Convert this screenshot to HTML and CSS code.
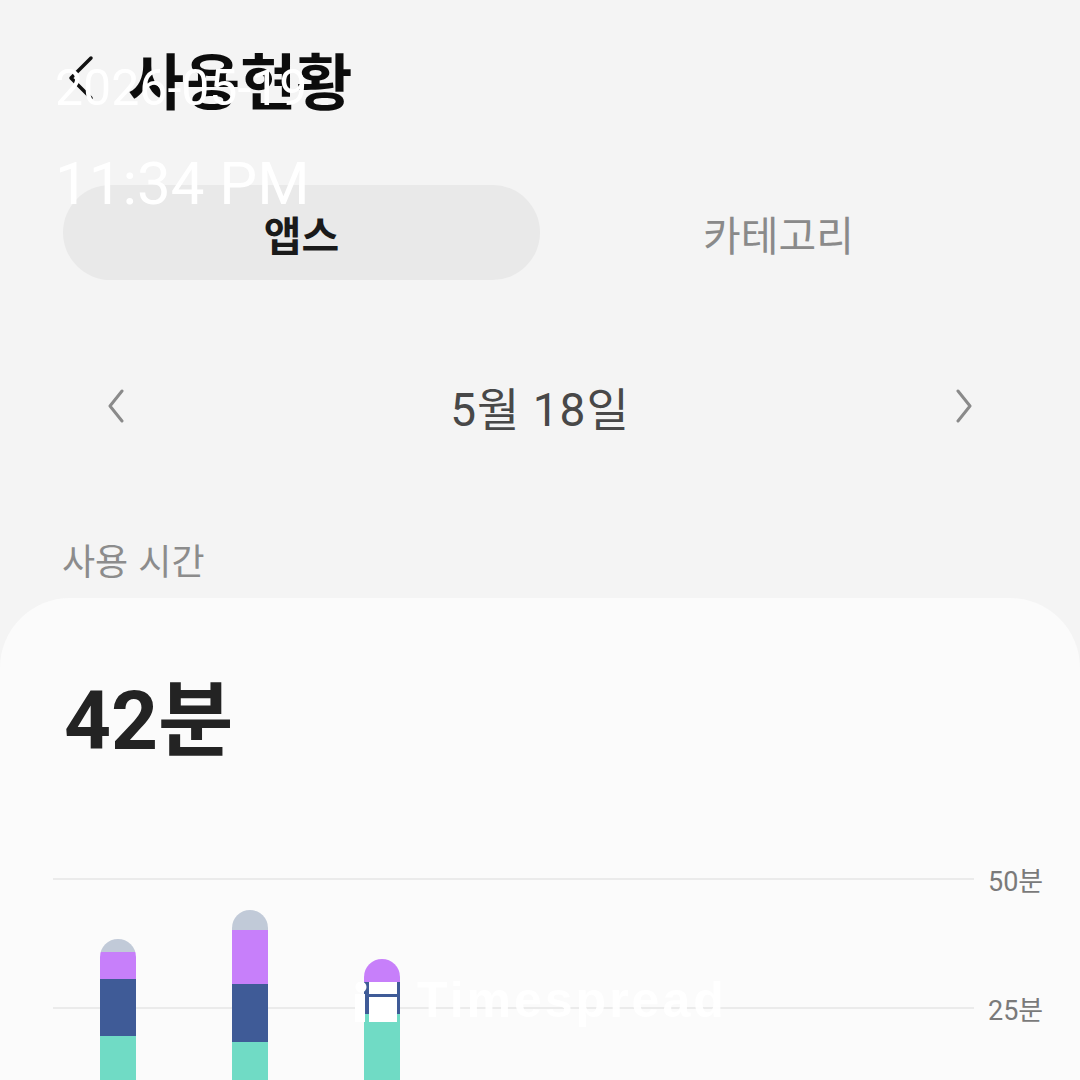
FILE: index.html
```html
<!DOCTYPE html>
<html lang="ko">
<head>
    <meta charset="utf-8">
    <link rel="stylesheet" href="styles.css">
    <title>사용현황</title>
</head>
<body>
    <header class="topbar">
        <svg class="back" width="34" height="48" viewBox="0 0 34 48">
            <polyline points="28,4 8,24 28,44" />
        </svg>
        <h1 class="title">사용현황</h1>
    </header>

    <div class="tabs">
        <div class="tab active">앱스</div>
        <div class="tab">카테고리</div>
    </div>

    <div class="datenav">
        <svg class="chev" width="22" height="34" viewBox="0 0 22 34">
            <polyline points="17,2 5,17 17,32" />
        </svg>
        <div class="date">5월 18일</div>
        <svg class="chev" width="22" height="34" viewBox="0 0 22 34">
            <polyline points="5,2 17,17 5,32" />
        </svg>
    </div>

    <div class="section-label">사용 시간</div>

    <section class="card">
        <div class="total">42분</div>

        <div class="chart">
            <div class="grid">
                <div class="grid-row"><span class="line"></span><span class="tick">50분</span></div>
                <div class="grid-row"><span class="line"></span><span class="tick">25분</span></div>
            </div>
            <div class="bars">
                <div class="bar">
                    <span class="seg other" style="height: 13px"></span>
                    <span class="seg purple" style="height: 27px"></span>
                    <span class="seg navy" style="height: 57px"></span>
                    <span class="seg teal" style="height: 101px"></span>
                </div>
                <div class="bar">
                    <span class="seg other" style="height: 20px"></span>
                    <span class="seg purple" style="height: 54px"></span>
                    <span class="seg navy" style="height: 58px"></span>
                    <span class="seg teal" style="height: 95px"></span>
                </div>
                <div class="bar">
                    <span class="seg purple" style="height: 23px"></span>
                    <span class="seg navy" style="height: 32px"></span>
                    <span class="seg teal" style="height: 123px"></span>
                </div>
            </div>
        </div>
    </section>

    <!-- capture stamp + watermark sit over the screenshot -->
    <div class="stamp">
        <div class="stamp-date">2026-05-19</div>
        <div class="stamp-time">11:34 PM</div>
    </div>

    <div class="watermark">
        <svg class="wm-icon" width="44" height="42" viewBox="0 0 44 42">
            <circle cx="6" cy="5" r="5.5" />
            <rect x="0" y="12" width="10" height="28" />
            <rect x="14" y="0" width="28" height="12" />
            <rect x="14" y="15" width="28" height="25" />
        </svg>
        <span class="wm-text">Timespread</span>
    </div>
</body>
</html>
```

FILE: styles.css
```css
body {
    margin: 0;
    background: #f4f4f4;
    font-family: Roboto, "Noto Sans CJK KR", sans-serif;
    color: #1a1a1a;
    overflow: hidden;
    height: 1080px;
    position: relative;
}

.topbar {
    height: 156px;
    display: flex;
    align-items: center;
    padding-left: 63px;
}

    .topbar .back {
        fill: none;
        stroke: #111;
        stroke-width: 3.5;
        stroke-linecap: round;
        stroke-linejoin: round;
    }

.title {
    margin: 0 0 0 31px;
    font-family: "Noto Sans CJK KR", sans-serif;
    font-size: 61px;
    font-weight: 700;
    line-height: 1;
    color: #0c0c0c;
}

.tabs {
    margin: 29px 63px 0;
    height: 95px;
    display: flex;
}

.tab {
    flex: 1;
    display: flex;
    align-items: center;
    justify-content: center;
    border-radius: 48px;
    font-family: "Noto Sans CJK KR", sans-serif;
    font-size: 41px;
    color: #8a8a8a;
}

    .tab.active {
        background: #e9e9e9;
        color: #1a1a1a;
        font-weight: 700;
    }

.datenav {
    margin-top: 76px;
    height: 100px;
    padding: 0 105px;
    display: flex;
    align-items: center;
    justify-content: space-between;
}

    .datenav .chev {
        fill: none;
        stroke: #8a8a8a;
        stroke-width: 3;
        stroke-linecap: round;
        stroke-linejoin: round;
    }

.date {
    font-size: 46px;
    letter-spacing: 1px;
    color: #484848;
}

.section-label {
    margin: 85px 0 0 62px;
    font-family: "Noto Sans CJK KR", sans-serif;
    font-size: 36px;
    line-height: 36px;
    color: #8c8c8c;
}

.card {
    margin-top: 21px;
    background: #fbfbfb;
    border-radius: 70px 70px 0 0;
    padding-top: 82px;
    height: 600px;
}

.total {
    margin-left: 64px;
    font-size: 82px;
    font-weight: 700;
    line-height: 82px;
    color: #232323;
}

.chart {
    margin-top: 102px;
    padding: 0 35px 0 53px;
    display: grid;
}

    .chart > div {
        grid-area: 1 / 1;
    }

.grid {
    display: flex;
    flex-direction: column;
    gap: 99px;
}

.grid-row {
    height: 30px;
    display: flex;
    align-items: center;
}

    .grid-row .line {
        flex: 1;
        height: 2px;
        background: #ebebeb;
    }

    .grid-row .tick {
        width: 57px;
        margin-left: 14px;
        font-size: 27px;
        color: #7a7a7a;
    }

.bars {
    height: 273px;
    display: flex;
    align-items: flex-end;
    gap: 96px;
    padding-left: 47px;
}

.bar {
    width: 36px;
    display: flex;
    flex-direction: column;
    border-radius: 18px 18px 0 0;
    overflow: hidden;
}

.seg {
    display: block;
}

.other { background: #c1cad8; }
.purple { background: #c77ffa; }
.navy { background: #3f5b97; }
.teal { background: #70dbc5; }

.stamp {
    position: absolute;
    left: 55px;
    top: 63px;
    color: #fff;
    font-family: Roboto, sans-serif;
}

.stamp-date {
    font-size: 50px;
    line-height: 50px;
}

.stamp-time {
    margin-top: 41px;
    font-size: 60px;
    line-height: 60px;
}

.watermark {
    position: absolute;
    left: 355px;
    top: 975px;
    display: flex;
    align-items: flex-start;
    gap: 18px;
}

.wm-icon {
    margin-top: 7px;
    fill: #fff;
}

.wm-text {
    font-family: "Liberation Sans", sans-serif;
    font-weight: 700;
    font-size: 50px;
    line-height: 50px;
    letter-spacing: 3px;
    color: rgba(255, 255, 255, 0.94);
}
```
